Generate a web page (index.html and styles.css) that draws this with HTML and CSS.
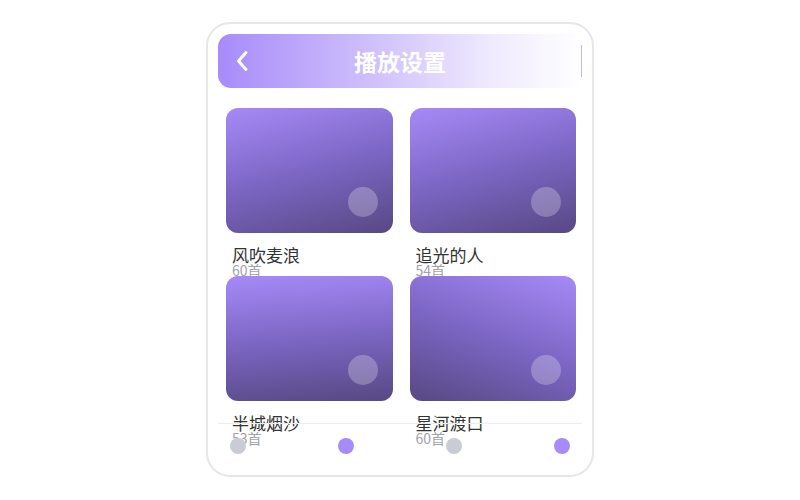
FILE: index.html
```html
<!DOCTYPE html>
<html lang="zh-CN">
<head>
<meta charset="utf-8">
<title>播放设置</title>
<link rel="stylesheet" href="styles.css">
</head>
<body>
<div class="stage">
  <div class="phone">
    <header class="topbar">
      <span class="back">
        <svg width="14" height="22" viewBox="0 0 14 22"><path d="M11 2.5 L3.5 11 L11 19.5" fill="none" stroke="#fff" stroke-width="3" stroke-linecap="round" stroke-linejoin="round"/></svg>
      </span>
      <h1 class="title">播放设置</h1>
      <span class="edge"><span class="edge-line"></span></span>
    </header>
    <main class="grid">
      <div class="item">
        <div class="cover cover-a"><span class="knob"></span></div>
        <div class="name">风吹麦浪</div>
        <div class="count">60首</div>
      </div>
      <div class="item">
        <div class="cover cover-a"><span class="knob"></span></div>
        <div class="name">追光的人</div>
        <div class="count">54首</div>
      </div>
      <div class="item">
        <div class="cover cover-b"><span class="knob"></span></div>
        <div class="name">半城烟沙</div>
        <div class="count">53首</div>
      </div>
      <div class="item">
        <div class="cover cover-c"><span class="knob"></span></div>
        <div class="name">星河渡口</div>
        <div class="count">60首</div>
      </div>
    </main>
    <nav class="dots">
      <span class="dot"></span>
      <span class="dot on"></span>
      <span class="dot"></span>
      <span class="dot on"></span>
    </nav>
  </div>
</div>
</body>
</html>
```
FILE: styles.css
```css
html, body {
  margin: 0;
  background: #fff;
  font-family: "Noto Sans CJK SC", "Noto Sans", sans-serif;
}
.stage {
  display: flex;
  justify-content: center;
  padding-top: 22px;
}
.phone {
  position: relative;
  box-sizing: border-box;
  width: 388px;
  height: 455px;
  border: 2px solid #e7e7eb;
  border-radius: 24px;
  padding: 10px 10px 0;
  overflow: hidden;
  background: #fff;
}
.topbar {
  box-sizing: border-box;
  height: 54px;
  border-radius: 13px;
  background: linear-gradient(90deg, #a78bfa 0%, #cdbdfb 40%, #efeafe 75%, #ffffff 100%);
  display: grid;
  grid-template-columns: 1fr auto 1fr;
  align-items: center;
}
.back {
  display: flex;
  align-items: center;
  padding-left: 17px;
}
.back svg { display: block; }
.title {
  margin: 0;
  font-size: 23px;
  font-weight: 700;
  color: #fff;
  line-height: 1;
}
.edge {
  display: flex;
  justify-content: flex-end;
  align-items: center;
}
.edge-line {
  width: 1px;
  height: 32px;
  background: #c2b3fb;
}
.grid {
  margin-top: 20px;
  padding: 0 6px 0 8px;
  display: grid;
  grid-template-columns: 1fr 1fr;
  grid-auto-rows: 168px;
  column-gap: 17px;
}
.item {
  min-width: 0;
}
.cover {
  position: relative;
  height: 125px;
  border-radius: 12px;
}
.cover-a { background: linear-gradient(165deg, #a68af7 0%, #7c66c4 50%, #584883 100%); }
.cover-b { background: linear-gradient(175deg, #a68af7 0%, #7c66c4 50%, #584883 100%); }
.cover-c { background: linear-gradient(200deg, #a68af7 0%, #7c66c4 50%, #584883 100%); }
.knob {
  position: absolute;
  right: 15px;
  bottom: 16px;
  width: 30px;
  height: 30px;
  border-radius: 50%;
  background: rgba(255, 255, 255, 0.25);
}
.name {
  margin-top: 13px;
  padding-left: 6px;
  font-size: 17px;
  line-height: 17px;
  color: #333;
}
.count {
  padding-left: 6px;
  font-size: 14px;
  line-height: 14px;
  color: #a2a2aa;
}
.dots {
  position: absolute;
  left: 10px;
  right: 10px;
  bottom: 0;
  box-sizing: border-box;
  height: 52px;
  border-top: 1px solid #ececf0;
  padding: 14px 12px 0;
  display: flex;
  justify-content: space-between;
  align-items: flex-start;
}
.dot {
  width: 16px;
  height: 16px;
  border-radius: 50%;
  background: #c9cdd3;
}
.dot.on { background: #a78bfa; }
```
